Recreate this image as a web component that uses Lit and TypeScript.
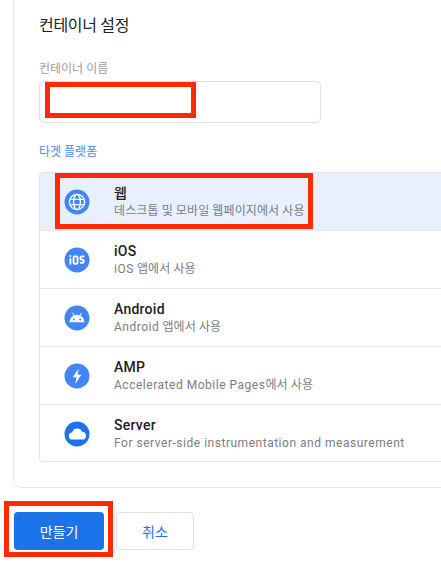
import { LitElement, html, css, svg } from "lit";
import { customElement } from "lit/decorators.js";

const icons: Record<string, unknown> = {
  web: svg`<circle cx="13" cy="13" r="12.5" fill="#4285f4"/><g fill="none" stroke="#fff" stroke-width="1.4"><circle cx="13" cy="13" r="7.6"/><ellipse cx="13" cy="13" rx="3.4" ry="7.6"/><path d="M6 10.4h14M6 15.6h14"/></g>`,
  ios: svg`<circle cx="13" cy="13" r="12.5" fill="#4285f4"/><g fill="none" stroke="#fff" stroke-width="1.9"><path d="M6.4 11.2v6.4"/><rect x="9.6" y="9.4" width="4" height="7.4" rx="1.2"/><path d="M20.4 9.4h-2.8a1.1 1.1 0 0 0-1.1 1.1v1a1.1 1.1 0 0 0 1.1 1.1h1a1.1 1.1 0 0 1 1.1 1.1v1a1.1 1.1 0 0 1-1.1 1.1H16"/></g><circle cx="6.4" cy="9.1" r="1.1" fill="#fff"/>`,
  android: svg`<circle cx="13" cy="13" r="12.5" fill="#4285f4"/><path d="M5.4 17.3a7.6 7.6 0 0 1 15.2 0z" fill="#fff"/><path d="M8.6 8l1.5 2.6M17.4 8l-1.5 2.6" stroke="#fff" stroke-width="1" stroke-linecap="round"/><circle cx="9.8" cy="14.4" r="1" fill="#4285f4"/><circle cx="16.2" cy="14.4" r="1" fill="#4285f4"/>`,
  amp: svg`<circle cx="13" cy="13" r="12.5" fill="#4285f4"/><path d="M14.8 5.6 8.7 14.3h3.7l-1.2 6.6 6.2-9.2h-3.8z" fill="#fff"/>`,
  server: svg`<circle cx="13" cy="13" r="12.5" fill="#1a73e8"/><path d="M8.7 18.6a3.6 3.6 0 0 1-.5-7.2 5.2 5.2 0 0 1 9.8-.6 3.9 3.9 0 0 1 .1 7.8z" fill="#fff"/>`,
};

const rows = [
  { id: "web", title: "웹", sub: html`데스크톱 및 모바일 웹페이지에서 사용`, selected: true },
  { id: "ios", title: "iOS", sub: html`<span class="en">iOS</span> 앱에서 사용` },
  { id: "android", title: "Android", sub: html`<span class="en">Android</span> 앱에서 사용` },
  { id: "amp", title: "AMP", sub: html`<span class="en">Accelerated Mobile Pages</span>에서 사용` },
  { id: "server", title: "Server", sub: html`<span class="en">For server-side instrumentation and measurement</span>` },
];

@customElement("app-root")
export class AppRoot extends LitElement {
  static styles = css`
    :host {
      display: block;
      width: 441px;
      height: 569px;
      overflow: hidden;
      position: relative;
      background: #fff;
      font-family: Roboto, "Noto Sans CJK KR", sans-serif;
      color: #202124;
    }
    .card {
      box-sizing: border-box;
      width: 460px;
      height: 488px;
      margin-left: 13px;
      padding: 16px 0 0 25px;
      border: 1px solid #e4e5e7;
      border-top: none;
      border-radius: 0 0 0 8px;
    }
    .title {
      font-size: 16px;
      line-height: 20px;
      font-weight: 400;
      letter-spacing: -0.3px;
    }
    .label {
      margin-top: 25px;
      font-size: 12px;
      line-height: 16px;
      color: #9a9b9e;
    }
    .input {
      box-sizing: border-box;
      width: 282px;
      height: 41.5px;
      margin-top: 4px;
      border: 1px solid #dfe0e2;
      border-radius: 5px;
    }
    .section {
      margin-top: 21.5px;
      font-size: 12px;
      line-height: 16px;
      color: #4a8af4;
    }
    .list {
      box-sizing: border-box;
      width: 440px;
      margin-top: 12px;
      border: 1px solid #e3e4e6;
      border-radius: 4px 0 0 4px;
    }
    .row {
      box-sizing: border-box;
      height: 58.1px;
      display: flex;
      align-items: center;
      padding-left: 24px;
      gap: 24px;
      border-bottom: 1px solid #e8e9eb;
    }
    .row:last-child { border-bottom: none; height: 55.5px; padding-top: 1px; }
    .row.selected { background: #e8f0fe; }
    .row svg { width: 26px; height: 26px; flex: none; }
    .name {
      font-size: 14px;
      line-height: 18px;
      font-weight: 500;
      letter-spacing: 0.25px;
      color: #202124;
      margin-bottom: 1px;
    }
    .sub {
      font-size: 12px;
      line-height: 16px;
      color: #7b7d81;
      letter-spacing: 0.1px;
      white-space: nowrap;
      margin-bottom: 1px;
    }
    .en { letter-spacing: 0.52px; }
    .actions {
      display: flex;
      gap: 12px;
      margin: 24px 0 0 14px;
    }
    .btn {
      box-sizing: border-box;
      height: 38px;
      display: flex;
      align-items: center;
      justify-content: center;
      border-radius: 4px;
      font-size: 14px;
    }
    .primary { width: 90px; background: #1a73e8; color: #fff; }
    .secondary { width: 78px; border: 1px solid #dfe0e2; color: #1a73e8; }
    .mark {
      position: absolute;
      box-sizing: border-box;
      border: 5px solid #ff2a00;
    }
    .m1 { left: 45px; top: 82px; width: 151px; height: 36px; }
    .m2 { left: 55px; top: 173px; width: 258px; height: 56px; }
    .m3 { left: 4px; top: 501px; width: 109px; height: 56px; }
  `;

  render() {
    return html`
      <div class="card">
        <div class="title">컨테이너 설정</div>
        <div class="label">컨테이너 이름</div>
        <div class="input"></div>
        <div class="section">타겟 플랫폼</div>
        <div class="list">
          ${rows.map(
            (r) => html`
              <div class="row ${r.selected ? "selected" : ""}">
                <svg viewBox="0 0 26 26">${icons[r.id]}</svg>
                <div>
                  <div class="name">${r.title}</div>
                  <div class="sub">${r.sub}</div>
                </div>
              </div>
            `
          )}
        </div>
      </div>
      <div class="actions">
        <div class="btn primary">만들기</div>
        <div class="btn secondary">취소</div>
      </div>
      <div class="mark m1"></div>
      <div class="mark m2"></div>
      <div class="mark m3"></div>
    `;
  }
}
